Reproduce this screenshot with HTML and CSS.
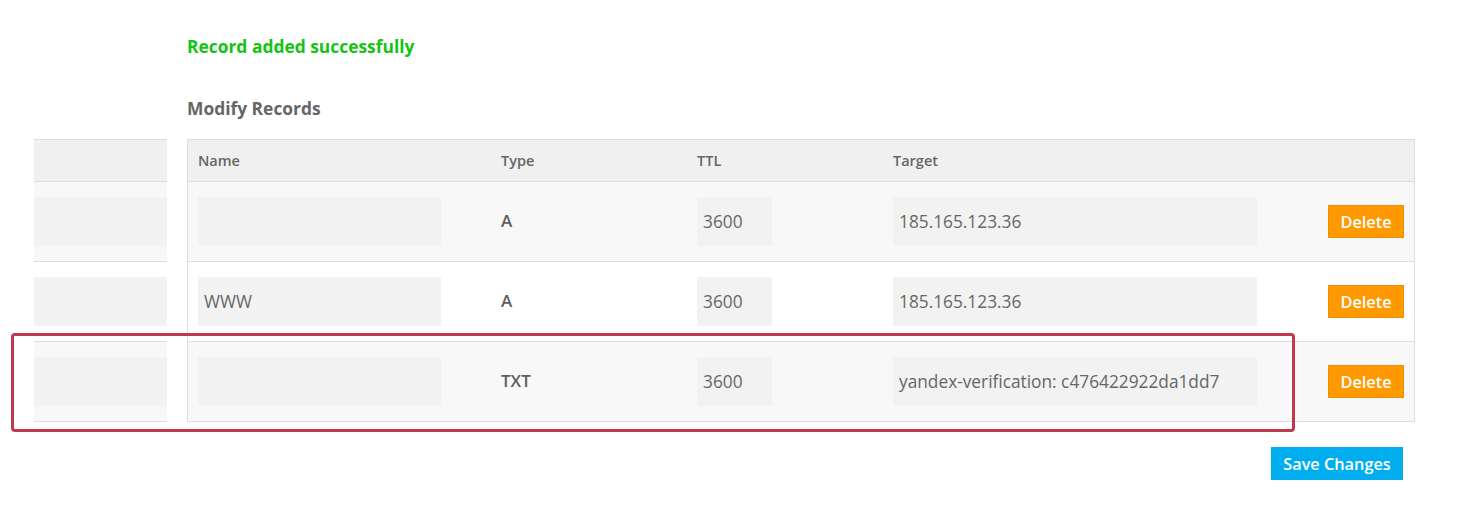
FILE: index.html
```html
<!DOCTYPE html>
<html lang="en">
<head>
<meta charset="utf-8">
<title>Modify Records</title>
<link rel="stylesheet" href="styles.css">
</head>
<body>
<div class="page">
  <p class="msg">Record added successfully</p>
  <h2 class="heading">Modify Records</h2>

  <div class="stub">
    <div class="stub-head"></div>
    <div class="stub-row odd"><div class="stub-input"></div></div>
    <div class="stub-row"><div class="stub-input"></div></div>
    <div class="stub-row odd"><div class="stub-input"></div></div>
  </div>

  <div class="records">
    <div class="row head">
      <div class="cell">Name</div>
      <div class="cell">Type</div>
      <div class="cell">TTL</div>
      <div class="cell">Target</div>
      <div class="cell"></div>
    </div>
    <div class="row odd">
      <div class="cell"><div class="field name"></div></div>
      <div class="cell type">A</div>
      <div class="cell"><div class="field ttl">3600</div></div>
      <div class="cell"><div class="field target">185.165.123.36</div></div>
      <div class="cell act"><button class="btn-delete">Delete</button></div>
    </div>
    <div class="row">
      <div class="cell"><div class="field name">WWW</div></div>
      <div class="cell type">A</div>
      <div class="cell"><div class="field ttl">3600</div></div>
      <div class="cell"><div class="field target">185.165.123.36</div></div>
      <div class="cell act"><button class="btn-delete">Delete</button></div>
    </div>
    <div class="row odd">
      <div class="cell"><div class="field name"></div></div>
      <div class="cell type">TXT</div>
      <div class="cell"><div class="field ttl">3600</div></div>
      <div class="cell"><div class="field target">yandex-verification: c476422922da1dd7</div></div>
      <div class="cell act"><button class="btn-delete">Delete</button></div>
    </div>
  </div>

  <div class="save-wrap"><button class="btn-save">Save Changes</button></div>

  <div class="highlight"></div>
</div>
</body>
</html>
```

FILE: styles.css
```css
* { box-sizing: border-box; }

body {
  margin: 0;
  background: #fff;
  font-family: "Open Sans", "Liberation Sans", sans-serif;
  color: #666;
}

.page {
  position: relative;
  display: grid;
  grid-template-columns: 133px 1228px;
  column-gap: 20px;
  padding: 35px 0 0 34px;
}

.msg {
  grid-column: 2;
  grid-row: 1;
  margin: 0;
  font-size: 17.4px;
  line-height: 22px;
  font-weight: 700;
  color: #14c414;
}

.heading {
  grid-column: 2;
  grid-row: 2;
  margin: 40px 0 20px;
  font-size: 17.4px;
  line-height: 22px;
  font-weight: 700;
  color: #666;
}

/* partial table on the left */
.stub {
  grid-column: 1;
  grid-row: 3;
  border-top: 1px solid #ddd;
  border-bottom: 1px solid #ddd;
}
.stub-head {
  height: 41px;
  background: #f0f0f0;
}
.stub-row {
  height: 80px;
  border-top: 1px solid #ddd;
  display: flex;
  align-items: center;
  background: #fff;
}
.stub-row.odd { background: #f8f8f8; }
.stub-input {
  width: 100%;
  height: 49px;
  background: #f2f2f2;
}

/* main records table */
.records {
  grid-column: 2;
  grid-row: 3;
  border: 1px solid #ddd;
}
.row {
  display: grid;
  grid-template-columns: 303px 196px 196px 384px 1fr;
  align-items: center;
  height: 80px;
  border-top: 1px solid #ddd;
  background: #fff;
}
.row.odd { background: #f8f8f8; }
.row.head {
  height: 41px;
  border-top: 0;
  background: #f0f0f0;
  font-size: 14.5px;
  font-weight: 600;
  color: #666;
}
.cell { padding: 0 10px; }
.cell.type {
  font-size: 17px;
  font-weight: 600;
  line-height: 22px;
  padding-bottom: 1px;
  color: #5e5e5e;
}
.cell.act {
  display: flex;
  justify-content: flex-end;
}

.field {
  height: 49px;
  background: #f2f2f2;
  padding: 0 6px;
  font-size: 17.3px;
  line-height: 49px;
  color: #666;
  white-space: nowrap;
}
.field.name { width: 243px; }
.field.ttl { width: 75px; }
.field.target { width: 364px; }

.btn-delete {
  width: 76px;
  height: 33px;
  padding: 0;
  border: 1px solid #ee8f00;
  background: #ff9900;
  color: #fff;
  font-family: "Open Sans", "Liberation Sans", sans-serif;
  font-size: 16.3px;
  font-weight: 600;
  cursor: pointer;
}

.save-wrap {
  grid-column: 2;
  grid-row: 4;
  display: flex;
  justify-content: flex-end;
  padding: 25px 12px 0 0;
}
.btn-save {
  width: 132px;
  height: 33px;
  padding: 0;
  border: 0;
  background: #00aeef;
  color: #fff;
  font-family: "Open Sans", "Liberation Sans", sans-serif;
  font-size: 16.3px;
  font-weight: 600;
  cursor: pointer;
}

/* annotation box drawn over the third row */
.highlight {
  position: absolute;
  left: 11px;
  top: 333px;
  width: 1284px;
  height: 99px;
  border: 3px solid #c03a4d;
  border-radius: 4px;
  pointer-events: none;
}
```
